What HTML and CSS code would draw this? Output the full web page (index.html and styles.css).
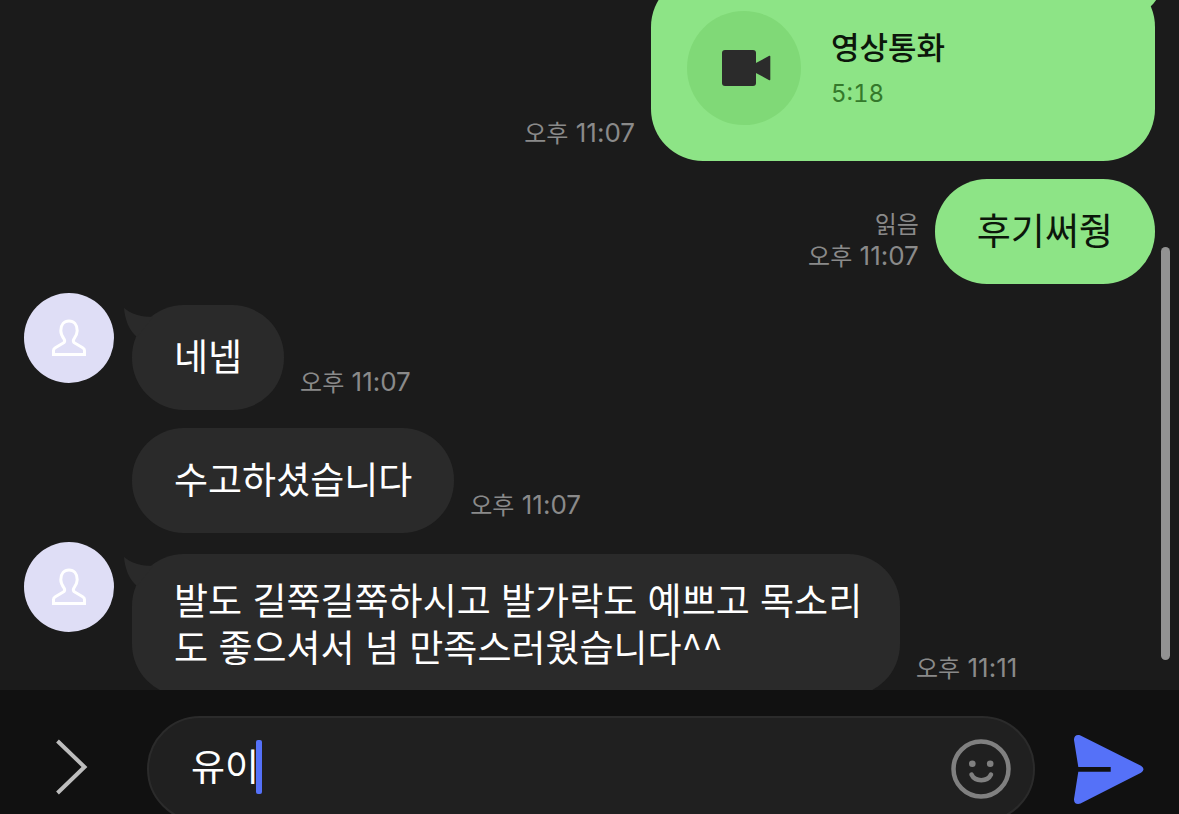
FILE: index.html
```
<!DOCTYPE html>
<html lang="ko">
<head>
  <meta charset="UTF-8" />
  <meta name="viewport" content="width=device-width, initial-scale=1.0" />
  <title>채팅</title>
  <link rel="stylesheet" href="styles.css">
</head>
<body>
  <svg class="defs" width="0" height="0" aria-hidden="true">
    <symbol id="person" viewBox="0 0 36 38">
      <path d="M2.5 35.500v-3.900c0-1.300.6-2.200 1.800-2.900l7.600-4.400c1.900-1.100 2.300-2.400 1.200-4.200-1.900-2.500-3.300-5.300-3.300-8.300C9.800 5.500 13.200 2 18 2S26.200 5.500 26.200 11.800c0 3-1.400 5.800-3.300 8.300-1.100 1.800-.7 3.100 1.200 4.200l7.600 4.400c1.200.7 1.800 1.600 1.800 2.900v3.900z" fill="none" stroke="#fff" stroke-width="3" />
    </symbol>
    <symbol id="tail" viewBox="0 0 30 30">
      <path d="M0 0C7 6 17 9 29 9L13 29C5 22 1 12 0 0z" fill="currentColor" />
    </symbol>
  </svg>

  <main class="chat">
    <div class="messages">
      <div class="row mine">
        <div class="meta"><time><span>오후</span> 11:07</time></div>
        <div class="bubble call">
          <svg class="tail" aria-hidden="true"><use href="#tail" /></svg>
          <span class="call-icon">
            <svg width="54" height="36" viewBox="0 0 54 36" aria-hidden="true">
              <rect x="5" width="34" height="36" rx="3" fill="#2b2b2b" />
              <path d="M38 13.500L52.300 5.800Q53.300 5.500 53.300 6.500V29.500Q53.300 30.500 52.300 30.200L38 22.500z" fill="#2b2b2b" />
            </svg>
          </span>
          <div>
            <p class="call-title">영상통화</p>
            <p class="call-time">5:18</p>
          </div>
        </div>
      </div>

      <div class="row mine">
        <div class="meta"><span>읽음</span><time><span>오후</span> 11:07</time></div>
        <div class="bubble">후기써줭</div>
      </div>

      <div class="row first">
        <span class="avatar"><svg width="36" height="38" aria-hidden="true"><use href="#person" /></svg></span>
        <div class="bubble">
          <svg class="tail" aria-hidden="true"><use href="#tail" /></svg>
          네넵
        </div>
        <div class="meta"><time><span>오후</span> 11:07</time></div>
      </div>

      <div class="row next">
        <div class="bubble">수고하셨습니다</div>
        <div class="meta"><time><span>오후</span> 11:07</time></div>
      </div>

      <div class="row first">
        <span class="avatar"><svg width="36" height="38" aria-hidden="true"><use href="#person" /></svg></span>
        <div class="bubble long">
          <svg class="tail" aria-hidden="true"><use href="#tail" /></svg>
          발도 길쭉길쭉하시고 발가락도 예쁘고 목소리도 좋으셔서 넘 만족스러웠습니다^^
        </div>
        <div class="meta"><time><span>오후</span> 11:11</time></div>
      </div>
    </div>
    <div class="scroll-thumb"></div>
  </main>

  <form class="composer">
    <button class="icon-btn more" type="button" aria-label="더보기">
      <svg width="36" height="60" viewBox="0 0 36 60" aria-hidden="true">
        <path d="M3.500 2L30.500 28L3.500 54" fill="none" stroke="#bdbdbd" stroke-width="4" />
      </svg>
    </button>
    <div class="field">
      <input class="text" type="text" value="유이" aria-label="메시지 입력" autocomplete="off">
      <span class="caret"></span>
      <button class="icon-btn emoji" type="button" aria-label="이모티콘">
        <svg width="60" height="60" viewBox="0 0 60 60" aria-hidden="true">
          <circle cx="30" cy="30" r="27.500" fill="none" stroke="#808080" stroke-width="4.500" />
          <circle cx="21.300" cy="24.700" r="3.300" fill="#808080" />
          <circle cx="39.200" cy="24.700" r="3.300" fill="#808080" />
          <path d="M20.500 35.500C24 43 36.500 43 40 35.500" fill="none" stroke="#808080" stroke-width="4.500" stroke-linecap="round" />
        </svg>
      </button>
    </div>
    <button class="icon-btn send" type="submit" aria-label="보내기">
      <svg width="72" height="72" viewBox="0 0 72 72" aria-hidden="true">
        <path d="M7.500 2.400L68 32.800Q73 36.300 68 39.800L7.500 70.600C3.500 72 .8 70 1 66L5.300 38.700H37.700V34H5.300L1 7C.8 3 3.500 1 7.500 2.400z" fill="#5571f8" />
      </svg>
    </button>
  </form>
</body>
</html>
```
FILE: styles.css
```
* {
  margin: 0;
  padding: 0;
  box-sizing: border-box;
}

body {
  height: 100vh;
  display: flex;
  flex-direction: column;
  overflow: hidden;
  background-color: #1b1b1b;
  color: #fff;
  font-family: "Noto Sans CJK KR", sans-serif;
}

.defs {
  position: absolute;
}

/* messages */
.chat {
  position: relative;
  flex: 1;
  min-height: 0;
  overflow: hidden;
}

/* the list is scrolled a little past its first bubble */
.messages {
  display: flex;
  flex-direction: column;
  margin-top: -25px;
  padding: 0 24px;
}

.row {
  display: flex;
  align-items: flex-end;
  gap: 16px;
}

.row.mine {
  justify-content: flex-end;
}

.row + .row {
  margin-top: 18px;
}

.row + .row.first {
  margin-top: 9px;
}

.row.next {
  padding-left: 108px;
}

.row.first .bubble {
  margin-top: 12px;
}

.avatar {
  display: flex;
  align-items: center;
  justify-content: center;
  align-self: flex-start;
  flex: none;
  width: 90px;
  height: 90px;
  margin-right: 2px;
  border-radius: 50%;
  background-color: #dfdef6;
}

.bubble {
  position: relative;
  display: flex;
  align-items: center;
  max-width: 768px;
  min-height: 105px;
  padding: 22px 42px 26px;
  border-radius: 52px;
  background-color: #2a2a2a;
  font-size: 37px;
  line-height: 47px;
  word-break: break-all;
}

.bubble.long {
  padding-right: 36px;
}

.mine .bubble {
  background-color: #8de486;
  color: #0c160b;
}

.tail {
  position: absolute;
  top: 3px;
  left: -8px;
  width: 30px;
  height: 30px;
  color: #2a2a2a;
}

.mine .tail {
  left: auto;
  right: -8px;
  color: #8de486;
  transform: scaleX(-1);
}

.bubble.call {
  width: 504px;
  gap: 30px;
  padding: 36px;
}

.call-icon {
  display: flex;
  align-items: center;
  justify-content: center;
  flex: none;
  width: 114px;
  height: 114px;
  border-radius: 50%;
  background-color: #80d977;
}

.call-title {
  margin-bottom: 14px;
  font-size: 31px;
  font-weight: 500;
  line-height: 36px;
}

.call-time {
  color: #34792b;
  font-family: Inter, sans-serif;
  font-size: 24px;
  font-variant-numeric: tabular-nums;
  line-height: 31px;
}

.meta {
  display: flex;
  flex-direction: column;
  align-items: flex-end;
  flex: none;
  padding-bottom: 12px;
  color: #8a8a8a;
  font-family: Inter, "Noto Sans CJK KR", sans-serif;
  font-size: 26px;
  line-height: 31px;
}

.meta span {
  font-size: 24px;
}

.scroll-thumb {
  position: absolute;
  top: 247px;
  right: 9px;
  bottom: 30px;
  width: 9px;
  border-radius: 5px;
  background-color: #929292;
}

/* composer */
.composer {
  flex: none;
  display: grid;
  grid-template-columns: 147px 1fr 144px;
  align-items: start;
  height: 124px;
  padding-top: 26px;
  background-color: #111;
}

.icon-btn {
  display: flex;
  align-items: center;
  justify-content: center;
  height: 106px;
  border: none;
  background: none;
  cursor: pointer;
}

.more {
  padding-right: 4px;
}

.send {
  padding-left: 4px;
}

.field {
  display: flex;
  align-items: center;
  height: 106px;
  padding: 0 22px 0 42px;
  border: 2px solid #2b2b2b;
  border-radius: 53px;
  background-color: #202020;
}

.text {
  field-sizing: content;
  padding-bottom: 8px;
  border: none;
  outline: none;
  background: none;
  color: #fff;
  caret-color: transparent;
  font: inherit;
  font-size: 37px;
  line-height: 47px;
}

.caret {
  flex: none;
  width: 6px;
  height: 54px;
  margin: 0 0 4px -3px;
  border-radius: 2px;
  background-color: #5571f8;
}

.emoji {
  margin-left: auto;
}
```
